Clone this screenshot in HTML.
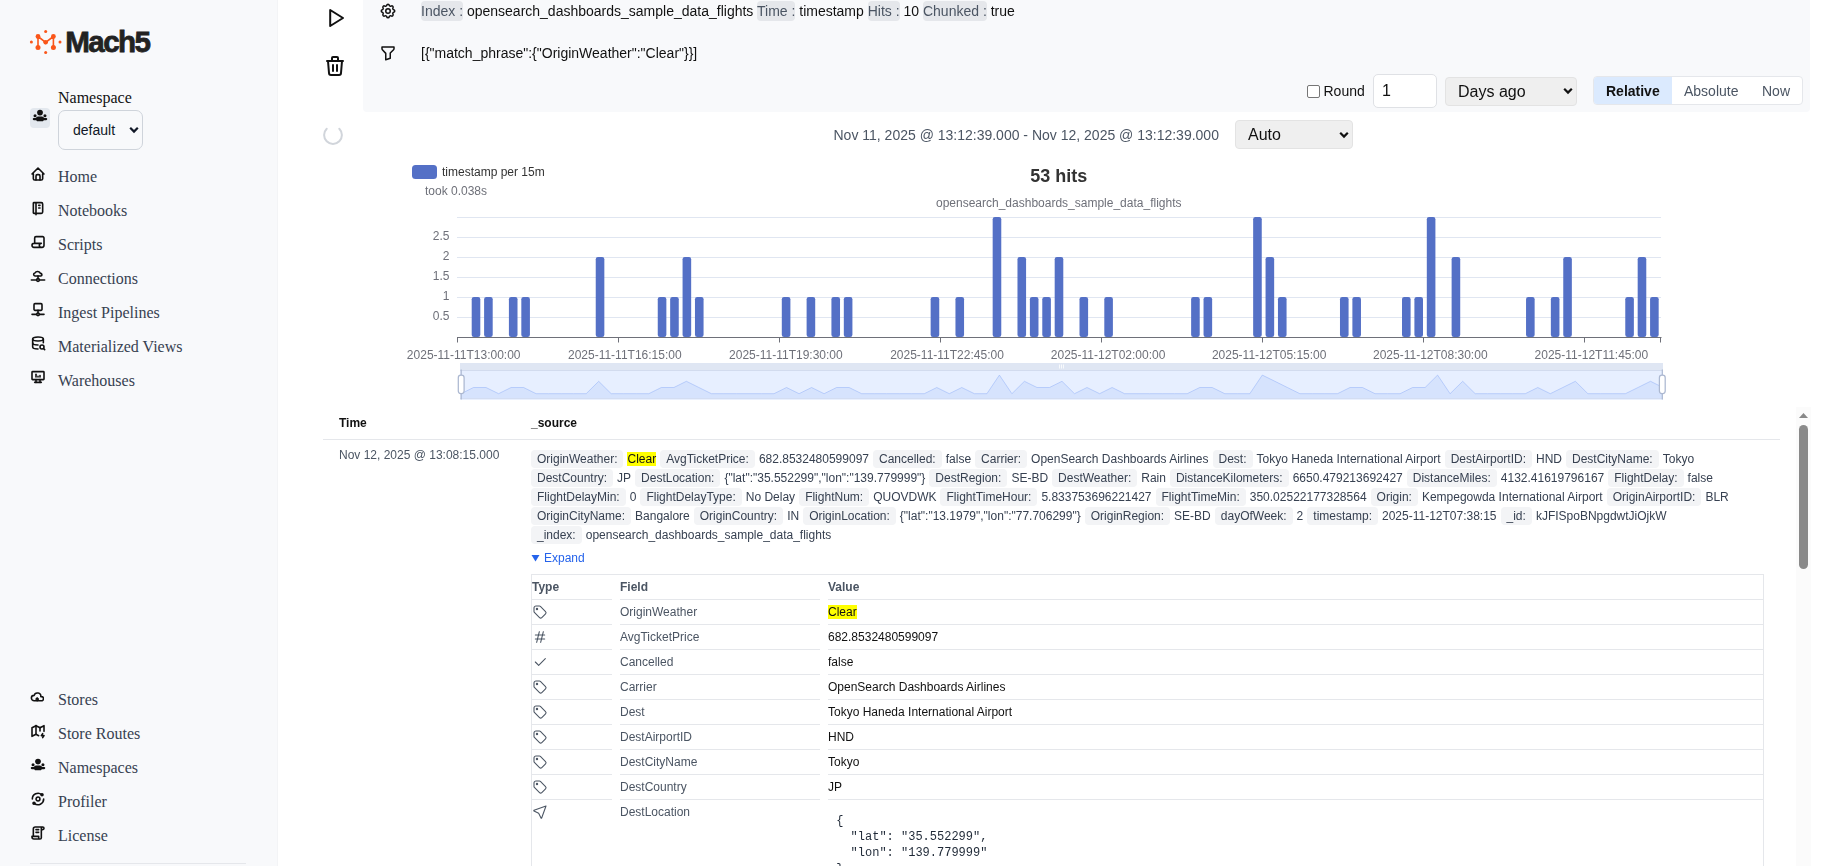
<!DOCTYPE html>
<html><head><meta charset="utf-8">
<style>
*{box-sizing:border-box;margin:0;padding:0}
html,body{width:1830px;height:866px;overflow:hidden;background:#fff;font-family:"Liberation Sans",sans-serif;color:#111}
.a{position:absolute;white-space:pre}
#side{position:absolute;left:0;top:0;width:278px;height:866px;background:#f8f9fb;border-right:1px solid #f3f4f6}
.nav{position:absolute;left:58px;margin-top:1px;font-family:"Liberation Serif",serif;font-size:16px;line-height:16px;color:#374151}
.ic{position:absolute;left:30px;width:16px;height:16px}
#panel{position:absolute;left:363px;top:-10px;width:1447px;height:122px;background:#f8f9fb;border-radius:4px}
.pill{background:#e5e7eb;color:#4b5563;border-radius:4px;padding:2px 0}
</style></head><body>
<div id="side">
  <!-- logo -->
  <svg class="a" style="left:0;top:0" width="70" height="60" viewBox="0 0 70 60">
    <g fill="#fa561a">
      <circle cx="45.66" cy="31.4" r="1.5"/>
      <circle cx="45.66" cy="52.5" r="1.5"/>
      <circle cx="31.4" cy="42" r="1.5"/>
      <circle cx="60" cy="42" r="1.5"/>
      <circle cx="38" cy="36.5" r="2.4"/>
      <circle cx="53.4" cy="36.5" r="2.4"/>
      <circle cx="38" cy="47.5" r="2.5"/>
      <circle cx="53.4" cy="47.5" r="2.5"/>
      <circle cx="45.66" cy="42.3" r="2.3"/>
      <path d="M38 47.5 V36.5 L45.66 42.3 L53.4 36.5 V47.5" fill="none" stroke="#fa561a" stroke-width="1.6" stroke-linejoin="round"/><path d="M43.2 41.6 L48.1 41.6 L45.66 44.6 Z"/>
    </g>
  </svg>
  <div class="a" style="left:65.3px;top:26.9px;font-size:29.6px;line-height:29.6px;font-weight:700;letter-spacing:-1.6px;color:#222;-webkit-text-stroke:0.75px #222;transform:scaleY(1.02);transform-origin:0 24px">Mach5</div>

  <div class="nav" style="top:89px;color:#111">Namespace</div>
  <div class="a" style="left:30px;top:108px;width:20px;height:20px;border-radius:4px;background:#e3e8ee"></div>
  <div class="a" style="left:58px;top:110px;width:85px;height:40px;border:1px solid #cfd4db;border-radius:7px;background:#f8f9fb"></div>
  <div class="a" style="left:73px;top:123px;font-size:14px;line-height:14px;color:#111827">default</div>
  <svg class="a" style="left:129px;top:126px" width="10" height="8" viewBox="0 0 10 8"><path d="M1.2 1.8 L5 5.6 L8.8 1.8" fill="none" stroke="#111827" stroke-width="2.2"/></svg>

  <svg class="ic" style="top:166px" viewBox="0 0 24 24" fill="none" stroke="#111" stroke-width="2.4" stroke-linecap="round" stroke-linejoin="round"><path d="M5 12l-2 0l9 -9l9 9l-2 0"/><path d="M5 12v7a2 2 0 0 0 2 2h10a2 2 0 0 0 2 -2v-7"/><path d="M9 21v-6a2 2 0 0 1 2 -2h2a2 2 0 0 1 2 2v6"/></svg>
<svg class="ic" style="top:200px" viewBox="0 0 24 24" fill="none" stroke="#111" stroke-width="2.4" stroke-linecap="round" stroke-linejoin="round"><path d="M6 4h11a2 2 0 0 1 2 2v12a2 2 0 0 1 -2 2h-11a1 1 0 0 1 -1 -1v-14a1 1 0 0 1 1 -1m3 0v18"/><path d="M13 8l2 0"/><path d="M13 12l2 0"/></svg>
<svg class="ic" style="top:234px" viewBox="0 0 24 24" fill="none" stroke="#111" stroke-width="2.4" stroke-linecap="round" stroke-linejoin="round"><path d="M17 20h-11a3 3 0 0 1 0 -6h11a3 3 0 0 0 0 6h1a3 3 0 0 0 3 -3v-11a2 2 0 0 0 -2 -2h-10a2 2 0 0 0 -2 2v8"/></svg>
<svg class="ic" style="top:267px" viewBox="0 0 24 24" fill="none" stroke="#111" stroke-width="2.4" stroke-linecap="round" stroke-linejoin="round"><path d="M7.8 13.4a2.2 2.2 0 0 1 -.3 -4.4a4.2 3.6 0 0 1 8 .6a1.9 1.9 0 0 1 .8 3.8z"/><path d="M2 19.5h7.8"/><path d="M14.2 19.5h7.8"/><path d="M10 19.5a2 2 0 1 0 4 0a2 2 0 0 0 -4 0"/><path d="M12 13.4v4"/></svg>
<svg class="ic" style="top:301px" viewBox="0 0 24 24" fill="none" stroke="#111" stroke-width="2.4" stroke-linecap="round" stroke-linejoin="round"><path d="M7.5 4h9a1.5 1.5 0 0 1 1.5 1.5v7a1.5 1.5 0 0 1 -1.5 1.5h-9a1.5 1.5 0 0 1 -1.5 -1.5v-7a1.5 1.5 0 0 1 1.5 -1.5z"/><path d="M12 14v4"/><path d="M3 20h7"/><path d="M14 20h7"/><path d="M10 20a2 2 0 1 0 4 0a2 2 0 0 0 -4 0"/></svg>
<svg class="ic" style="top:335px" viewBox="0 0 24 24" fill="none" stroke="#111" stroke-width="2.4" stroke-linecap="round" stroke-linejoin="round"><path d="M4 6c0 1.657 3.582 3 8 3s8 -1.343 8 -3s-3.582 -3 -8 -3s-8 1.343 -8 3"/><path d="M4 6v6c0 1.657 3.582 3 8 3m8 -3.5v-5.5"/><path d="M4 12v6c0 1.657 3.582 3 8 3"/><path d="M15 18a3 3 0 1 0 6 0a3 3 0 1 0 -6 0"/><path d="M20.2 20.2l1.8 1.8"/></svg>
<svg class="ic" style="top:369px" viewBox="0 0 24 24" fill="none" stroke="#111" stroke-width="2.4" stroke-linecap="round" stroke-linejoin="round"><path d="M3 5a1 1 0 0 1 1 -1h16a1 1 0 0 1 1 1v10a1 1 0 0 1 -1 1h-16a1 1 0 0 1 -1 -1z"/><path d="M7 20h10"/><path d="M9 16v4"/><path d="M15 16v4"/><path d="M9 12v-4"/><path d="M12 12v-1"/><path d="M15 12v-2"/></svg>
<svg class="a" style="left:29.9px;top:690.3px" width="14.4" height="14.4" viewBox="0 0 24 24" fill="none" stroke="#111" stroke-width="2.6" stroke-linecap="round" stroke-linejoin="round"><path d="M7 18a4.6 4.4 0 0 1 0 -9a5 4.5 0 0 1 11 2h1a3.5 3.5 0 0 1 0 7z"/><path d="M10.2 15.2l1.8 -1.8l1.8 1.8"/><path d="M12 13.6v4.4"/></svg>
<svg class="ic" style="top:723px" viewBox="0 0 24 24" fill="none" stroke="#111" stroke-width="2.4" stroke-linecap="round" stroke-linejoin="round"><path d="M13 19l-4 -2l-6 3v-13l6 -3l6 3l6 -3v8.5"/><path d="M9 4v13"/><path d="M15 7v5"/><path d="M19 16l-2 3h4l-2 3"/></svg>
<svg class="ic" style="top:791px" viewBox="0 0 24 24" fill="none" stroke="#111" stroke-width="2.4" stroke-linecap="round" stroke-linejoin="round"><path d="M3.5 12a8.5 8.5 0 0 1 14 -6.5"/><path d="M20.5 12a8.5 8.5 0 0 1 -14 6.5"/><circle cx="18" cy="5.6" r="1.5" fill="#111"/><circle cx="6" cy="18.4" r="1.5" fill="#111"/><path d="M9.1 12a2.9 2.9 0 1 0 5.8 0a2.9 2.9 0 1 0 -5.8 0"/></svg>
<svg class="ic" style="top:825px" viewBox="0 0 24 24" fill="none" stroke="#111" stroke-width="2.4" stroke-linecap="round" stroke-linejoin="round"><path d="M15 21h-9a3 3 0 0 1 -3 -3v-1h10v2a2 2 0 0 0 4 0v-14a2 2 0 1 1 2 2h-2m2 -4h-11a3 3 0 0 0 -3 3v11"/><path d="M9 7l4 0"/><path d="M9 11l4 0"/></svg>
<svg class="ic" style="top:757px" viewBox="0 0 24 24" fill="#111"><circle cx="12" cy="6.8" r="4.3"/><circle cx="4.6" cy="11.6" r="2.3"/><circle cx="19.4" cy="11.6" r="2.3"/><path d="M9 12.6h6a3.2 3.2 0 0 1 3.1 2.4h3.2a1.6 1.6 0 0 1 0 3.2h-3.6a3.5 3.5 0 0 1 -3 1.8h-5.4a3.5 3.5 0 0 1 -3 -1.8h-3.6a1.6 1.6 0 0 1 0 -3.2h3.2a3.2 3.2 0 0 1 3.1 -2.4z"/></svg>
<svg class="a" style="left:32px;top:108px" width="16" height="16" viewBox="0 0 24 24" fill="#111"><circle cx="12" cy="6.8" r="4.3"/><circle cx="4.6" cy="11.6" r="2.3"/><circle cx="19.4" cy="11.6" r="2.3"/><path d="M9 12.6h6a3.2 3.2 0 0 1 3.1 2.4h3.2a1.6 1.6 0 0 1 0 3.2h-3.6a3.5 3.5 0 0 1 -3 1.8h-5.4a3.5 3.5 0 0 1 -3 -1.8h-3.6a1.6 1.6 0 0 1 0 -3.2h3.2a3.2 3.2 0 0 1 3.1 -2.4z"/></svg>
  <div class="nav" style="top:168px">Home</div>
  <div class="nav" style="top:202px">Notebooks</div>
  <div class="nav" style="top:236px">Scripts</div>
  <div class="nav" style="top:270px">Connections</div>
  <div class="nav" style="top:304px">Ingest Pipelines</div>
  <div class="nav" style="top:338px">Materialized Views</div>
  <div class="nav" style="top:372px">Warehouses</div>

  <div class="nav" style="top:691px">Stores</div>
  <div class="nav" style="top:725px">Store Routes</div>
  <div class="nav" style="top:759px">Namespaces</div>
  <div class="nav" style="top:793px">Profiler</div>
  <div class="nav" style="top:827px">License</div>
  <div class="a" style="left:30px;top:863px;width:216px;height:1px;background:#e5e7eb"></div>
</div>

<div id="main" style="position:absolute;left:0;top:0;width:1830px;height:866px;will-change:transform">
<div id="panel"></div>

<!-- left action icons -->
<svg class="a" style="left:326px;top:6px" width="22" height="24" viewBox="0 0 22 24"><path d="M4.2 4 L17 12 L4.2 20 Z" fill="none" stroke="#111" stroke-width="2" stroke-linejoin="round"/></svg>
<svg class="a" style="left:323px;top:54px" width="24" height="24" viewBox="0 0 24 24" fill="none" stroke="#111" stroke-width="2" stroke-linecap="round" stroke-linejoin="round"><path d="M4 7h16"/><path d="M10 11v6"/><path d="M14 11v6"/><path d="M5 7l1 12a2 2 0 0 0 2 2h8a2 2 0 0 0 2 -2l1 -12"/><path d="M9 7v-3a1 1 0 0 1 1 -1h4a1 1 0 0 1 1 1v3"/></svg>
<!-- gear -->
<svg class="a" style="left:379px;top:2px" width="18" height="18" viewBox="0 0 24 24" fill="none" stroke="#111" stroke-width="2" stroke-linecap="round" stroke-linejoin="round"><path d="M10.325 4.317c.426 -1.756 2.924 -1.756 3.35 0a1.724 1.724 0 0 0 2.573 1.066c1.543 -.94 3.31 .826 2.37 2.37a1.724 1.724 0 0 0 1.065 2.572c1.756 .426 1.756 2.924 0 3.35a1.724 1.724 0 0 0 -1.066 2.573c.94 1.543 -.826 3.31 -2.37 2.37a1.724 1.724 0 0 0 -2.572 1.065c-.426 1.756 -2.924 1.756 -3.35 0a1.724 1.724 0 0 0 -2.573 -1.066c-1.543 .94 -3.31 -.826 -2.37 -2.37a1.724 1.724 0 0 0 -1.065 -2.572c-1.756 -.426 -1.756 -2.924 0 -3.35a1.724 1.724 0 0 0 1.066 -2.573c-.94 -1.543 .826 -3.31 2.37 -2.37c1 .608 2.296 .07 2.572 -1.065z"/><path d="M9 12a3 3 0 1 0 6 0a3 3 0 0 0 -6 0"/></svg>
<!-- funnel -->
<svg class="a" style="left:379px;top:44px" width="18" height="18" viewBox="0 0 24 24" fill="none" stroke="#111" stroke-width="2" stroke-linecap="round" stroke-linejoin="round"><path d="M4 4h16v2.172a2 2 0 0 1 -.586 1.414l-4.414 4.414v7l-6 2v-8.5l-4.48 -4.928a2 2 0 0 1 -.52 -1.345v-2.227z"/></svg>

<!-- controls row -->
<div class="a" style="left:1307px;top:85px;width:13px;height:13px;border:1px solid #767676;border-radius:2px;background:#fff"></div>
<div class="a" style="left:1323.5px;top:83.5px;font-size:14px;line-height:14px;color:#111">Round</div>
<div class="a" style="left:1373px;top:74px;width:64px;height:34px;border:1px solid #dfe1e5;border-radius:5px;background:#fff"></div>
<div class="a" style="left:1382px;top:83px;font-size:16px;line-height:16px;color:#111">1</div>
<div class="a" style="left:1445px;top:77px;width:132px;height:29px;border:1px solid #e3e3e3;border-radius:4px;background:#efefef"></div>
<div class="a" style="left:1458px;top:84px;font-size:16px;line-height:16px;color:#111">Days ago</div>
<svg class="a" style="left:1563px;top:87px" width="10" height="8" viewBox="0 0 10 8"><path d="M1.2 1.8 L5 5.6 L8.8 1.8" fill="none" stroke="#111" stroke-width="2.2"/></svg>
<div class="a" style="left:1593px;top:76px;width:210px;height:29px;border:1px solid #e5e7eb;border-radius:4px;background:#fff;overflow:hidden">
  <div class="a" style="left:0;top:0;width:78px;height:27px;background:#dbeafe"></div>
</div>
<div class="a" style="left:1606px;top:83.5px;font-size:14px;line-height:14px;font-weight:700;color:#111">Relative</div>
<div class="a" style="left:1684px;top:83.5px;font-size:14px;line-height:14px;color:#4b5563">Absolute</div>
<div class="a" style="left:1762px;top:83.5px;font-size:14px;line-height:14px;color:#4b5563">Now</div>

<!-- spinner -->
<svg class="a" style="left:321px;top:123px" width="24" height="24" viewBox="0 0 24 24"><path d="M18.29 5.71 A8.9 8.9 0 1 1 5.71 5.71" fill="none" stroke="#d1d5db" stroke-width="2" stroke-linecap="round"/></svg>

<!-- date range -->
<div class="a" style="left:833.5px;top:127.5px;font-size:14px;line-height:14px;color:#4b5563">Nov 11, 2025 @ 13:12:39.000 - Nov 12, 2025 @ 13:12:39.000</div>
<div class="a" style="left:1235px;top:120px;width:118px;height:29px;border:1px solid #e3e3e3;border-radius:4px;background:#efefef"></div>
<div class="a" style="left:1248px;top:127px;font-size:16px;line-height:16px;color:#111">Auto</div>
<svg class="a" style="left:1339px;top:130.5px" width="10" height="8" viewBox="0 0 10 8"><path d="M1.2 1.8 L5 5.6 L8.8 1.8" fill="none" stroke="#111" stroke-width="2.2"/></svg>

<svg class="a" style="left:0;top:0" width="1830" height="410" viewBox="0 0 1830 410">
<rect x="412" y="165" width="25" height="14" rx="3.5" fill="#5470c6"/>
<text x="442" y="175.5" font-size="12" fill="#333">timestamp per 15m</text>
<text x="425" y="195" font-size="12" fill="#6e7079">took 0.038s</text>
<text x="1058.75" y="182" font-size="18" font-weight="700" fill="#333" text-anchor="middle">53 hits</text>
<text x="1058.75" y="206.8" font-size="12" fill="#6e7079" text-anchor="middle">opensearch_dashboards_sample_data_flights</text>
<line x1="457" y1="217.5" x2="1661" y2="217.5" stroke="#e0e6f1" stroke-width="1"/>
<line x1="457" y1="237.5" x2="1661" y2="237.5" stroke="#e0e6f1" stroke-width="1"/>
<line x1="457" y1="257.5" x2="1661" y2="257.5" stroke="#e0e6f1" stroke-width="1"/>
<line x1="457" y1="277.5" x2="1661" y2="277.5" stroke="#e0e6f1" stroke-width="1"/>
<line x1="457" y1="297.5" x2="1661" y2="297.5" stroke="#e0e6f1" stroke-width="1"/>
<line x1="457" y1="317.5" x2="1661" y2="317.5" stroke="#e0e6f1" stroke-width="1"/>
<text x="449.5" y="240.1" font-size="12" fill="#6e7079" text-anchor="end">2.5</text>
<text x="449.5" y="260.1" font-size="12" fill="#6e7079" text-anchor="end">2</text>
<text x="449.5" y="280.1" font-size="12" fill="#6e7079" text-anchor="end">1.5</text>
<text x="449.5" y="300.1" font-size="12" fill="#6e7079" text-anchor="end">1</text>
<text x="449.5" y="320.1" font-size="12" fill="#6e7079" text-anchor="end">0.5</text>
<rect x="471.70" y="297.10" width="8.6" height="39.90" rx="2.2" fill="#5470c6"/>
<rect x="484.10" y="297.10" width="8.6" height="39.90" rx="2.2" fill="#5470c6"/>
<rect x="508.91" y="297.10" width="8.6" height="39.90" rx="2.2" fill="#5470c6"/>
<rect x="521.32" y="297.10" width="8.6" height="39.90" rx="2.2" fill="#5470c6"/>
<rect x="595.74" y="257.10" width="8.6" height="79.90" rx="2.2" fill="#5470c6"/>
<rect x="657.76" y="297.10" width="8.6" height="39.90" rx="2.2" fill="#5470c6"/>
<rect x="670.16" y="297.10" width="8.6" height="39.90" rx="2.2" fill="#5470c6"/>
<rect x="682.57" y="257.10" width="8.6" height="79.90" rx="2.2" fill="#5470c6"/>
<rect x="694.97" y="297.10" width="8.6" height="39.90" rx="2.2" fill="#5470c6"/>
<rect x="781.80" y="297.10" width="8.6" height="39.90" rx="2.2" fill="#5470c6"/>
<rect x="806.61" y="297.10" width="8.6" height="39.90" rx="2.2" fill="#5470c6"/>
<rect x="831.42" y="297.10" width="8.6" height="39.90" rx="2.2" fill="#5470c6"/>
<rect x="843.82" y="297.10" width="8.6" height="39.90" rx="2.2" fill="#5470c6"/>
<rect x="930.65" y="297.10" width="8.6" height="39.90" rx="2.2" fill="#5470c6"/>
<rect x="955.46" y="297.10" width="8.6" height="39.90" rx="2.2" fill="#5470c6"/>
<rect x="992.67" y="217.10" width="8.6" height="119.90" rx="2.2" fill="#5470c6"/>
<rect x="1017.48" y="257.10" width="8.6" height="79.90" rx="2.2" fill="#5470c6"/>
<rect x="1029.88" y="297.10" width="8.6" height="39.90" rx="2.2" fill="#5470c6"/>
<rect x="1042.28" y="297.10" width="8.6" height="39.90" rx="2.2" fill="#5470c6"/>
<rect x="1054.69" y="257.10" width="8.6" height="79.90" rx="2.2" fill="#5470c6"/>
<rect x="1079.50" y="297.10" width="8.6" height="39.90" rx="2.2" fill="#5470c6"/>
<rect x="1104.30" y="297.10" width="8.6" height="39.90" rx="2.2" fill="#5470c6"/>
<rect x="1191.13" y="297.10" width="8.6" height="39.90" rx="2.2" fill="#5470c6"/>
<rect x="1203.54" y="297.10" width="8.6" height="39.90" rx="2.2" fill="#5470c6"/>
<rect x="1253.15" y="217.10" width="8.6" height="119.90" rx="2.2" fill="#5470c6"/>
<rect x="1265.56" y="257.10" width="8.6" height="79.90" rx="2.2" fill="#5470c6"/>
<rect x="1277.96" y="297.10" width="8.6" height="39.90" rx="2.2" fill="#5470c6"/>
<rect x="1339.98" y="297.10" width="8.6" height="39.90" rx="2.2" fill="#5470c6"/>
<rect x="1352.38" y="297.10" width="8.6" height="39.90" rx="2.2" fill="#5470c6"/>
<rect x="1402.00" y="297.10" width="8.6" height="39.90" rx="2.2" fill="#5470c6"/>
<rect x="1414.40" y="297.10" width="8.6" height="39.90" rx="2.2" fill="#5470c6"/>
<rect x="1426.81" y="217.10" width="8.6" height="119.90" rx="2.2" fill="#5470c6"/>
<rect x="1451.62" y="257.10" width="8.6" height="79.90" rx="2.2" fill="#5470c6"/>
<rect x="1526.04" y="297.10" width="8.6" height="39.90" rx="2.2" fill="#5470c6"/>
<rect x="1550.85" y="297.10" width="8.6" height="39.90" rx="2.2" fill="#5470c6"/>
<rect x="1563.25" y="257.10" width="8.6" height="79.90" rx="2.2" fill="#5470c6"/>
<rect x="1625.27" y="297.10" width="8.6" height="39.90" rx="2.2" fill="#5470c6"/>
<rect x="1637.68" y="257.10" width="8.6" height="79.90" rx="2.2" fill="#5470c6"/>
<rect x="1650.08" y="297.10" width="8.6" height="39.90" rx="2.2" fill="#5470c6"/>
<line x1="457" y1="337.5" x2="1661.5" y2="337.5" stroke="#6e7079" stroke-width="1"/>
<line x1="457.5" y1="337.5" x2="457.5" y2="342.5" stroke="#6e7079" stroke-width="1"/>
<text x="463.7" y="359" font-size="12" fill="#6e7079" text-anchor="middle">2025-11-11T13:00:00</text>
<line x1="618.5" y1="337.5" x2="618.5" y2="342.5" stroke="#6e7079" stroke-width="1"/>
<text x="624.8" y="359" font-size="12" fill="#6e7079" text-anchor="middle">2025-11-11T16:15:00</text>
<line x1="779.5" y1="337.5" x2="779.5" y2="342.5" stroke="#6e7079" stroke-width="1"/>
<text x="785.9" y="359" font-size="12" fill="#6e7079" text-anchor="middle">2025-11-11T19:30:00</text>
<line x1="940.5" y1="337.5" x2="940.5" y2="342.5" stroke="#6e7079" stroke-width="1"/>
<text x="947.0" y="359" font-size="12" fill="#6e7079" text-anchor="middle">2025-11-11T22:45:00</text>
<line x1="1101.5" y1="337.5" x2="1101.5" y2="342.5" stroke="#6e7079" stroke-width="1"/>
<text x="1108.1" y="359" font-size="12" fill="#6e7079" text-anchor="middle">2025-11-12T02:00:00</text>
<line x1="1262.5" y1="337.5" x2="1262.5" y2="342.5" stroke="#6e7079" stroke-width="1"/>
<text x="1269.2" y="359" font-size="12" fill="#6e7079" text-anchor="middle">2025-11-12T05:15:00</text>
<line x1="1423.5" y1="337.5" x2="1423.5" y2="342.5" stroke="#6e7079" stroke-width="1"/>
<text x="1430.3" y="359" font-size="12" fill="#6e7079" text-anchor="middle">2025-11-12T08:30:00</text>
<line x1="1584.5" y1="337.5" x2="1584.5" y2="342.5" stroke="#6e7079" stroke-width="1"/>
<text x="1591.4" y="359" font-size="12" fill="#6e7079" text-anchor="middle">2025-11-12T11:45:00</text>
<line x1="1660.5" y1="337.5" x2="1660.5" y2="342.5" stroke="#6e7079" stroke-width="1"/>
<rect x="460" y="363" width="1203" height="7" fill="#d2dbee" fill-opacity="0.7"/>
<rect x="460" y="370" width="1203" height="29.5" fill="#87afff" fill-opacity="0.2"/>
<path d="M461,399.5 L461.0,393.7 L473.5,387.5 L486.0,387.5 L498.6,393.7 L511.1,387.5 L523.6,387.5 L536.1,393.7 L548.6,393.7 L561.2,393.7 L573.7,393.7 L586.2,393.7 L598.7,381.3 L611.2,393.7 L623.8,393.7 L636.3,393.7 L648.8,393.7 L661.3,387.5 L673.9,387.5 L686.4,381.3 L698.9,387.5 L711.4,393.7 L723.9,393.7 L736.5,393.7 L749.0,393.7 L761.5,393.7 L774.0,393.7 L786.5,387.5 L799.1,393.7 L811.6,387.5 L824.1,393.7 L836.6,387.5 L849.1,387.5 L861.7,393.7 L874.2,393.7 L886.7,393.7 L899.2,393.7 L911.8,393.7 L924.3,393.7 L936.8,387.5 L949.3,393.7 L961.8,387.5 L974.4,393.7 L986.9,393.7 L999.4,375.1 L1011.9,393.7 L1024.4,381.3 L1037.0,387.5 L1049.5,387.5 L1062.0,381.3 L1074.5,393.7 L1087.0,387.5 L1099.6,393.7 L1112.1,387.5 L1124.6,393.7 L1137.1,393.7 L1149.6,393.7 L1162.2,393.7 L1174.7,393.7 L1187.2,393.7 L1199.7,387.5 L1212.2,387.5 L1224.8,393.7 L1237.3,393.7 L1249.8,393.7 L1262.3,375.1 L1274.9,381.3 L1287.4,387.5 L1299.9,393.7 L1312.4,393.7 L1324.9,393.7 L1337.5,393.7 L1350.0,387.5 L1362.5,387.5 L1375.0,393.7 L1387.5,393.7 L1400.1,393.7 L1412.6,387.5 L1425.1,387.5 L1437.6,375.1 L1450.1,393.7 L1462.7,381.3 L1475.2,393.7 L1487.7,393.7 L1500.2,393.7 L1512.8,393.7 L1525.3,393.7 L1537.8,387.5 L1550.3,393.7 L1562.8,387.5 L1575.4,381.3 L1587.9,393.7 L1600.4,393.7 L1612.9,393.7 L1625.4,393.7 L1638.0,387.5 L1650.5,381.3 L1663.0,387.5 L1663,399.5 Z" fill="#8fb0f7" fill-opacity="0.2"/>
<polyline points="461.0,393.7 473.5,387.5 486.0,387.5 498.6,393.7 511.1,387.5 523.6,387.5 536.1,393.7 548.6,393.7 561.2,393.7 573.7,393.7 586.2,393.7 598.7,381.3 611.2,393.7 623.8,393.7 636.3,393.7 648.8,393.7 661.3,387.5 673.9,387.5 686.4,381.3 698.9,387.5 711.4,393.7 723.9,393.7 736.5,393.7 749.0,393.7 761.5,393.7 774.0,393.7 786.5,387.5 799.1,393.7 811.6,387.5 824.1,393.7 836.6,387.5 849.1,387.5 861.7,393.7 874.2,393.7 886.7,393.7 899.2,393.7 911.8,393.7 924.3,393.7 936.8,387.5 949.3,393.7 961.8,387.5 974.4,393.7 986.9,393.7 999.4,375.1 1011.9,393.7 1024.4,381.3 1037.0,387.5 1049.5,387.5 1062.0,381.3 1074.5,393.7 1087.0,387.5 1099.6,393.7 1112.1,387.5 1124.6,393.7 1137.1,393.7 1149.6,393.7 1162.2,393.7 1174.7,393.7 1187.2,393.7 1199.7,387.5 1212.2,387.5 1224.8,393.7 1237.3,393.7 1249.8,393.7 1262.3,375.1 1274.9,381.3 1287.4,387.5 1299.9,393.7 1312.4,393.7 1324.9,393.7 1337.5,393.7 1350.0,387.5 1362.5,387.5 1375.0,393.7 1387.5,393.7 1400.1,393.7 1412.6,387.5 1425.1,387.5 1437.6,375.1 1450.1,393.7 1462.7,381.3 1475.2,393.7 1487.7,393.7 1500.2,393.7 1512.8,393.7 1525.3,393.7 1537.8,387.5 1550.3,393.7 1562.8,387.5 1575.4,381.3 1587.9,393.7 1600.4,393.7 1612.9,393.7 1625.4,393.7 1638.0,387.5 1650.5,381.3 1663.0,387.5" fill="none" stroke="#8fb0f7" stroke-opacity="0.5" stroke-width="1"/>
<path d="M1059.5 364.5v4M1061.5 364.5v4M1063.5 364.5v4" stroke="#fff" stroke-opacity="0.8" stroke-width="1"/>
<line x1="460" y1="370.5" x2="1663" y2="370.5" stroke="#d2dbee" stroke-width="1"/>
<line x1="460" y1="398.5" x2="1663" y2="398.5" stroke="#d2dbee" stroke-width="1" stroke-opacity="0.7"/>
<line x1="461.2" y1="369.5" x2="461.2" y2="399.5" stroke="#acb8d1" stroke-width="1.2"/>
<line x1="1662.3" y1="369.5" x2="1662.3" y2="399.5" stroke="#acb8d1" stroke-width="1.2"/>
<rect x="458.3" y="375.2" width="5.8" height="18.3" rx="2.5" fill="#fff" stroke="#acb8d1" stroke-width="1.25"/>
<rect x="1659.4" y="375.2" width="5.8" height="18.3" rx="2.5" fill="#fff" stroke="#acb8d1" stroke-width="1.25"/>
</svg>

<style>
.th{position:absolute;font-size:12px;line-height:12px;font-weight:700;color:#111}
#src{position:absolute;left:531px;top:450px;width:1233px;display:flex;flex-wrap:wrap;row-gap:1px;column-gap:4px;font-size:12px;line-height:13px;color:#374151}
#src .p{display:flex;gap:4px;white-space:pre}
#src .k{background:#f3f4f6;border-radius:4px;padding:3px 6px 2px;height:18px}
#src .v{padding:3px 0 2px;height:18px}
mark{background:#ff0;color:#111}
.rl{position:absolute;height:1px;background:#e5e7eb}
.ft{position:absolute;left:620px;font-size:12px;line-height:12px;color:#4b5563;white-space:pre}
.vt{position:absolute;left:828px;font-size:12px;line-height:12px;color:#111;white-space:pre}
.ti{position:absolute;left:532px;width:16px;height:16px}
</style>
<div class="th" style="left:339px;top:416.5px">Time</div>
<div class="th" style="left:531px;top:416.5px">_source</div>
<div class="rl" style="left:323px;top:439px;width:1457px"></div>
<div class="a" style="left:339px;top:448.5px;font-size:12px;line-height:12px;color:#4b5563">Nov 12, 2025 @ 13:08:15.000</div>
<div id="src">
<span class="p"><span class="k">OriginWeather:</span><span class="v"><mark>Clear</mark></span></span>
<span class="p"><span class="k">AvgTicketPrice:</span><span class="v">682.8532480599097</span></span>
<span class="p"><span class="k">Cancelled:</span><span class="v">false</span></span>
<span class="p"><span class="k">Carrier:</span><span class="v">OpenSearch Dashboards Airlines</span></span>
<span class="p"><span class="k">Dest:</span><span class="v">Tokyo Haneda International Airport</span></span>
<span class="p"><span class="k">DestAirportID:</span><span class="v">HND</span></span>
<span class="p"><span class="k">DestCityName:</span><span class="v">Tokyo</span></span>
<span class="p"><span class="k">DestCountry:</span><span class="v">JP</span></span>
<span class="p"><span class="k">DestLocation:</span><span class="v">{"lat":"35.552299","lon":"139.779999"}</span></span>
<span class="p"><span class="k">DestRegion:</span><span class="v">SE-BD</span></span>
<span class="p"><span class="k">DestWeather:</span><span class="v">Rain</span></span>
<span class="p"><span class="k">DistanceKilometers:</span><span class="v">6650.479213692427</span></span>
<span class="p"><span class="k">DistanceMiles:</span><span class="v">4132.41619796167</span></span>
<span class="p"><span class="k">FlightDelay:</span><span class="v">false</span></span>
<span class="p"><span class="k">FlightDelayMin:</span><span class="v">0</span></span>
<span class="p"><span class="k">FlightDelayType:</span><span class="v">No Delay</span></span>
<span class="p"><span class="k">FlightNum:</span><span class="v">QUOVDWK</span></span>
<span class="p"><span class="k">FlightTimeHour:</span><span class="v">5.833753696221427</span></span>
<span class="p"><span class="k">FlightTimeMin:</span><span class="v">350.02522177328564</span></span>
<span class="p"><span class="k">Origin:</span><span class="v">Kempegowda International Airport</span></span>
<span class="p"><span class="k">OriginAirportID:</span><span class="v">BLR</span></span>
<span class="p"><span class="k">OriginCityName:</span><span class="v">Bangalore</span></span>
<span class="p"><span class="k">OriginCountry:</span><span class="v">IN</span></span>
<span class="p"><span class="k">OriginLocation:</span><span class="v">{"lat":"13.1979","lon":"77.706299"}</span></span>
<span class="p"><span class="k">OriginRegion:</span><span class="v">SE-BD</span></span>
<span class="p"><span class="k">dayOfWeek:</span><span class="v">2</span></span>
<span class="p"><span class="k">timestamp:</span><span class="v">2025-11-12T07:38:15</span></span>
<span class="p"><span class="k">_id:</span><span class="v">kJFISpoBNpgdwtJiOjkW</span></span>
<span class="p"><span class="k">_index:</span><span class="v">opensearch_dashboards_sample_data_flights</span></span>
</div>
<svg class="a" style="left:531px;top:554px" width="9" height="8" viewBox="0 0 9 8"><path d="M0.5 1 H8.5 L4.5 7.5 Z" fill="#2563eb"/></svg>
<div class="a" style="left:544px;top:552px;font-size:12px;line-height:12px;color:#2563eb">Expand</div>

<!-- expanded table -->
<div class="a" style="left:531px;top:574px;width:1233px;height:300px;border:1px solid #e5e7eb;border-bottom:none"></div>
<div class="th" style="left:532px;top:580.5px;color:#4b5563">Type</div>
<div class="th" style="left:620px;top:580.5px;color:#4b5563">Field</div>
<div class="th" style="left:828px;top:580.5px;color:#4b5563">Value</div>
<div class="rl" style="left:531px;top:599px;width:81px"></div><div class="rl" style="left:620px;top:599px;width:200px"></div><div class="rl" style="left:828px;top:599px;width:936px"></div>
<svg class="ti" style="top:604px" viewBox="0 0 24 24" fill="none" stroke="#4b5563" stroke-width="1.6" stroke-linecap="round" stroke-linejoin="round"><path d="M7.5 7.5m-1 0a1 1 0 1 0 2 0a1 1 0 1 0 -2 0"/><path d="M3 6v5.172a2 2 0 0 0 .586 1.414l7.71 7.71a2.41 2.41 0 0 0 3.408 0l5.592 -5.592a2.41 2.41 0 0 0 0 -3.408l-7.71 -7.71a2 2 0 0 0 -1.414 -.586h-5.172a3 3 0 0 0 -3 3z"/></svg>
<div class="ft" style="top:605.5px">OriginWeather</div>
<div class="vt" style="top:605.5px"><mark>Clear</mark></div>
<div class="rl" style="left:531px;top:624px;width:81px"></div><div class="rl" style="left:620px;top:624px;width:200px"></div><div class="rl" style="left:828px;top:624px;width:936px"></div>
<svg class="ti" style="top:629px" viewBox="0 0 24 24" fill="none" stroke="#4b5563" stroke-width="1.6" stroke-linecap="round" stroke-linejoin="round"><path d="M5 9l14 0"/><path d="M5 15l14 0"/><path d="M11 4l-4 16"/><path d="M17 4l-4 16"/></svg>
<div class="ft" style="top:630.5px">AvgTicketPrice</div>
<div class="vt" style="top:630.5px">682.8532480599097</div>
<div class="rl" style="left:531px;top:649px;width:81px"></div><div class="rl" style="left:620px;top:649px;width:200px"></div><div class="rl" style="left:828px;top:649px;width:936px"></div>
<svg class="ti" style="top:654px" viewBox="0 0 24 24" fill="none" stroke="#4b5563" stroke-width="1.6" stroke-linecap="round" stroke-linejoin="round"><path d="M5 12l5 5l10 -10"/></svg>
<div class="ft" style="top:655.5px">Cancelled</div>
<div class="vt" style="top:655.5px">false</div>
<div class="rl" style="left:531px;top:674px;width:81px"></div><div class="rl" style="left:620px;top:674px;width:200px"></div><div class="rl" style="left:828px;top:674px;width:936px"></div>
<svg class="ti" style="top:679px" viewBox="0 0 24 24" fill="none" stroke="#4b5563" stroke-width="1.6" stroke-linecap="round" stroke-linejoin="round"><path d="M7.5 7.5m-1 0a1 1 0 1 0 2 0a1 1 0 1 0 -2 0"/><path d="M3 6v5.172a2 2 0 0 0 .586 1.414l7.71 7.71a2.41 2.41 0 0 0 3.408 0l5.592 -5.592a2.41 2.41 0 0 0 0 -3.408l-7.71 -7.71a2 2 0 0 0 -1.414 -.586h-5.172a3 3 0 0 0 -3 3z"/></svg>
<div class="ft" style="top:680.5px">Carrier</div>
<div class="vt" style="top:680.5px">OpenSearch Dashboards Airlines</div>
<div class="rl" style="left:531px;top:699px;width:81px"></div><div class="rl" style="left:620px;top:699px;width:200px"></div><div class="rl" style="left:828px;top:699px;width:936px"></div>
<svg class="ti" style="top:704px" viewBox="0 0 24 24" fill="none" stroke="#4b5563" stroke-width="1.6" stroke-linecap="round" stroke-linejoin="round"><path d="M7.5 7.5m-1 0a1 1 0 1 0 2 0a1 1 0 1 0 -2 0"/><path d="M3 6v5.172a2 2 0 0 0 .586 1.414l7.71 7.71a2.41 2.41 0 0 0 3.408 0l5.592 -5.592a2.41 2.41 0 0 0 0 -3.408l-7.71 -7.71a2 2 0 0 0 -1.414 -.586h-5.172a3 3 0 0 0 -3 3z"/></svg>
<div class="ft" style="top:705.5px">Dest</div>
<div class="vt" style="top:705.5px">Tokyo Haneda International Airport</div>
<div class="rl" style="left:531px;top:724px;width:81px"></div><div class="rl" style="left:620px;top:724px;width:200px"></div><div class="rl" style="left:828px;top:724px;width:936px"></div>
<svg class="ti" style="top:729px" viewBox="0 0 24 24" fill="none" stroke="#4b5563" stroke-width="1.6" stroke-linecap="round" stroke-linejoin="round"><path d="M7.5 7.5m-1 0a1 1 0 1 0 2 0a1 1 0 1 0 -2 0"/><path d="M3 6v5.172a2 2 0 0 0 .586 1.414l7.71 7.71a2.41 2.41 0 0 0 3.408 0l5.592 -5.592a2.41 2.41 0 0 0 0 -3.408l-7.71 -7.71a2 2 0 0 0 -1.414 -.586h-5.172a3 3 0 0 0 -3 3z"/></svg>
<div class="ft" style="top:730.5px">DestAirportID</div>
<div class="vt" style="top:730.5px">HND</div>
<div class="rl" style="left:531px;top:749px;width:81px"></div><div class="rl" style="left:620px;top:749px;width:200px"></div><div class="rl" style="left:828px;top:749px;width:936px"></div>
<svg class="ti" style="top:754px" viewBox="0 0 24 24" fill="none" stroke="#4b5563" stroke-width="1.6" stroke-linecap="round" stroke-linejoin="round"><path d="M7.5 7.5m-1 0a1 1 0 1 0 2 0a1 1 0 1 0 -2 0"/><path d="M3 6v5.172a2 2 0 0 0 .586 1.414l7.71 7.71a2.41 2.41 0 0 0 3.408 0l5.592 -5.592a2.41 2.41 0 0 0 0 -3.408l-7.71 -7.71a2 2 0 0 0 -1.414 -.586h-5.172a3 3 0 0 0 -3 3z"/></svg>
<div class="ft" style="top:755.5px">DestCityName</div>
<div class="vt" style="top:755.5px">Tokyo</div>
<div class="rl" style="left:531px;top:774px;width:81px"></div><div class="rl" style="left:620px;top:774px;width:200px"></div><div class="rl" style="left:828px;top:774px;width:936px"></div>
<svg class="ti" style="top:779px" viewBox="0 0 24 24" fill="none" stroke="#4b5563" stroke-width="1.6" stroke-linecap="round" stroke-linejoin="round"><path d="M7.5 7.5m-1 0a1 1 0 1 0 2 0a1 1 0 1 0 -2 0"/><path d="M3 6v5.172a2 2 0 0 0 .586 1.414l7.71 7.71a2.41 2.41 0 0 0 3.408 0l5.592 -5.592a2.41 2.41 0 0 0 0 -3.408l-7.71 -7.71a2 2 0 0 0 -1.414 -.586h-5.172a3 3 0 0 0 -3 3z"/></svg>
<div class="ft" style="top:780.5px">DestCountry</div>
<div class="vt" style="top:780.5px">JP</div>
<div class="rl" style="left:531px;top:799px;width:81px"></div><div class="rl" style="left:620px;top:799px;width:200px"></div><div class="rl" style="left:828px;top:799px;width:936px"></div>
<svg class="ti" style="top:804px" viewBox="0 0 24 24" fill="none" stroke="#4b5563" stroke-width="1.6" stroke-linecap="round" stroke-linejoin="round"><path d="M21 3l-6.5 18a.55 .55 0 0 1 -1 0l-3.5 -7l-7 -3.5a.55 .55 0 0 1 0 -1l18 -6.5"/></svg>
<div class="ft" style="top:805.5px">DestLocation</div>
<div class="rl" style="left:531px;top:799px;width:81px"></div><div class="rl" style="left:620px;top:799px;width:200px"></div><div class="rl" style="left:828px;top:799px;width:936px"></div>
<pre class="a" style="left:836.2px;top:812.6px;font-family:'Liberation Mono',monospace;font-size:12px;line-height:16px;color:#1f2937">{
  "lat": "35.552299",
  "lon": "139.779999"
}</pre>
<div class="a" style="left:1796px;top:407px;width:15px;height:459px;background:#fbfbfb"></div>
<svg class="a" style="left:1798px;top:412px" width="11" height="7" viewBox="0 0 11 7"><path d="M1 6 L5.5 1 L10 6 Z" fill="#888"/></svg>
<div class="a" style="left:1799px;top:425px;width:9px;height:144px;border-radius:4.5px;background:#8a8a8a"></div>


<div class="a" style="left:421px;top:4px;font-size:14px;line-height:14px"><span class="pill">Index :</span> opensearch_dashboards_sample_data_flights <span class="pill">Time :</span> timestamp <span class="pill">Hits :</span> 10 <span class="pill">Chunked :</span> true</div>
<div class="a" style="left:421px;top:45.5px;font-size:14px;line-height:14px">[{"match_phrase":{"OriginWeather":"Clear"}}]</div>

</div>
</body></html>
